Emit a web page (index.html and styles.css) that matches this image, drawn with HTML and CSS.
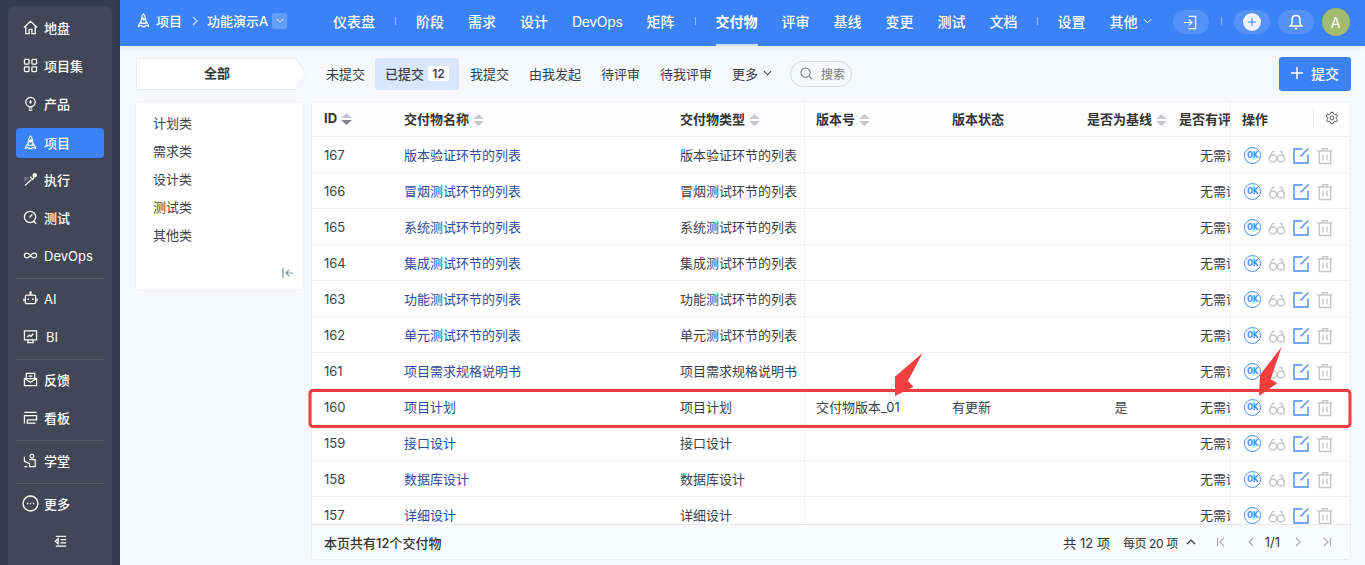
FILE: index.html
```html
<!DOCTYPE html>
<html lang="zh-CN">
<head>
    <title>项目 - 交付物</title>
    <meta charset="utf-8">
    <link rel="stylesheet" href="styles.css">
</head>
<body>
    <svg class="defs" width="0" height="0">
        <symbol id="i-rocket" viewBox="0 0 16 16"><path d="M8 1C5.800 3.400 5.300 6 5.500 11h5C10.700 6 10.200 3.400 8 1zM5.500 8.500L3 12.500l-.5 2 3-1.500M10.500 8.500l2.500 4 .5 2-3-1.500M6.500 13l-.3 1.500h3.600L9.500 13" fill="none" stroke="currentColor" stroke-width="1.200" stroke-linejoin="round"/><circle cx="8" cy="6.500" r="1.200" fill="currentColor"/></symbol>
        <symbol id="i-sort" viewBox="0 0 11 12"><path d="M5.500 0L11 5H0z" fill="#c9cad0"/><path d="M5.500 12L0 7h11z" fill="#c4c5cc"/></symbol>
        <symbol id="i-sort-on" viewBox="0 0 11 12"><path d="M5.500 0L11 5H0z" fill="#c4c5cc"/><path d="M5.500 12L0 7h11z" fill="#85868e"/></symbol>
        <symbol id="i-glasses" viewBox="0 0 18 18"><g fill="none" stroke="#c8c8c8" stroke-width="1.500"><circle cx="5" cy="11.500" r="3.500"/><circle cx="13" cy="11.500" r="3.500"/><path d="M8.400 11h1.200M1.500 11L4.500 4.500h2M16.500 11L13.500 4.500h-2"/></g></symbol>
        <symbol id="i-edit" viewBox="0 0 18 18"><path d="M10.500 2H2v14h14V7.500M16.500 1.500L8.500 9.500" fill="none" stroke="#4d8af5" stroke-width="1.400"/></symbol>
        <symbol id="i-trash" viewBox="0 0 18 18"><path d="M1.500 4h15M6.500 4V1.800h5V4M3.300 4v12.500h11.400V4M7 7.500v6M11 7.500v6" fill="none" stroke="#c8c8c8" stroke-width="1.400"/></symbol>
    </svg>

    <aside class="sidebar">
        <nav class="side-panel">
            <a class="side-item"><svg class="side-icon" viewBox="0 0 16 16"><path d="M1 8l7-6.500L15 8M3 7v7.500h3.500V10h3v4.500H13V7"/></svg>地盘</a>
            <a class="side-item"><svg class="side-icon" viewBox="0 0 16 16"><rect x="1.500" y="1.500" width="5" height="5" rx=".8"/><rect x="9.500" y="1.500" width="5" height="5" rx=".8"/><rect x="1.500" y="9.500" width="5" height="5" rx=".8"/><rect x="9.500" y="9.500" width="5" height="5" rx=".8"/></svg>项目集</a>
            <a class="side-item"><svg class="side-icon" viewBox="0 0 16 16"><circle cx="8" cy="6.500" r="5"/><path d="M6 15h4M6 12.800h4M8 4.500v3.500M6.500 6.500h3"/></svg>产品</a>
            <a class="side-item active"><svg class="side-icon"><use href="#i-rocket"/></svg>项目</a>
            <a class="side-item"><svg class="side-icon" viewBox="0 0 16 16"><path d="M2 14.500L9 8M7.500 5l3 3 1-2.500"/><circle cx="12.500" cy="3.500" r="1.800" fill="currentColor"/><path d="M1 6.500h5M1 8.500h3" stroke="#7b8090" stroke-width="1.600"/></svg>执行</a>
            <a class="side-item"><svg class="side-icon" viewBox="0 0 16 16"><circle cx="7.500" cy="7.500" r="6"/><path d="M11.500 12l2.500 2.800M10 4.800L7 8"/></svg>测试</a>
            <a class="side-item side-latin"><svg class="side-icon" viewBox="0 0 16 16"><path d="M8 8C6.800 6.300 5.600 5.500 4 5.500a2.500 2.500 0 000 5c1.600 0 2.800-.8 4-2.500zm0 0c1.200-1.700 2.400-2.500 4-2.500a2.500 2.500 0 010 5c-1.600 0-2.800-.8-4-2.500z"/></svg>DevOps</a>
            <div class="side-line"></div>
            <a class="side-item side-latin"><svg class="side-icon" viewBox="0 0 16 16"><rect x="2.500" y="4.500" width="11" height="9" rx="1.500"/><path d="M8 4.500V2M1 8v3M15 8v3"/><circle cx="8" cy="1.800" r=".8" fill="currentColor"/><path d="M5.500 8v1.500M10.500 8v1.500" stroke-width="1.600"/></svg>AI</a>
            <a class="side-item side-latin side-item-bi"><svg class="side-icon" viewBox="0 0 16 16"><path d="M1.500 2h13v9.500h-13zM5.500 11.500L5 14.500h6l-.5-3M4.500 8.500L7 6.500l1.500 1.500L11 5"/></svg>BI</a>
            <div class="side-line"></div>
            <a class="side-item"><svg class="side-icon" viewBox="0 0 16 16"><path d="M3.500 7V1.500h9V7M1.500 7h13v7.500h-13zM1.500 7l6.500 4 6.500-4M6 4.500h4"/></svg>反馈</a>
            <a class="side-item"><svg class="side-icon" viewBox="0 0 16 16"><path d="M14.500 2.500h-13M1.500 5.500v9M1.500 6h13v4.500h-10M4.500 10.500v3.500h9"/></svg>看板</a>
            <div class="side-line"></div>
            <a class="side-item"><svg class="side-icon" viewBox="0 0 16 16"><circle cx="9.500" cy="3.500" r="2"/><path d="M6.500 7h6.500v7.500H7v-4M1.500 4v5l5 2M1.500 14.500h3"/></svg>学堂</a>
            <div class="side-line"></div>
            <a class="side-item"><svg class="side-icon side-icon-big" viewBox="0 0 16 16"><circle cx="8" cy="8" r="7"/><path d="M4.600 8h1.200M7.400 8h1.200M10.200 8h1.200" stroke-width="1.600"/></svg>更多</a>
            <a class="side-item side-collapse"><svg class="side-icon" viewBox="0 0 16 16"><path d="M3 2.500h11M8 6h6M8 9.500h6M3 13h11M5.500 5L2.500 7.800l3 2.700z" /></svg></a>
        </nav>
    </aside>

    <div class="page">
        <header class="topbar">
            <div class="crumb">
                <svg class="crumb-icon"><use href="#i-rocket"/></svg>
                <span>项目</span>
                <svg class="crumb-arrow" viewBox="0 0 6 10"><path d="M1 1l4 4-4 4"/></svg>
                <span>功能演示A</span>
                <span class="crumb-drop"><svg viewBox="0 0 10 6"><path d="M1 1l4 4 4-4"/></svg></span>
            </div>
            <nav class="topnav">
                <a class="nav-item">仪表盘</a>
                <i class="nav-sep"></i>
                <a class="nav-item">阶段</a>
                <a class="nav-item">需求</a>
                <a class="nav-item">设计</a>
                <a class="nav-item nav-latin">DevOps</a>
                <a class="nav-item">矩阵</a>
                <i class="nav-sep"></i>
                <a class="nav-item active">交付物</a>
                <a class="nav-item">评审</a>
                <a class="nav-item">基线</a>
                <a class="nav-item">变更</a>
                <a class="nav-item">测试</a>
                <a class="nav-item">文档</a>
                <i class="nav-sep"></i>
                <a class="nav-item">设置</a>
                <a class="nav-item nav-more">其他<svg viewBox="0 0 10 6"><path d="M1 1l4 4 4-4"/></svg></a>
            </nav>
            <div class="top-tools">
                <span class="pill"><svg viewBox="0 0 16 16"><path d="M6 1.500h7.500v13H6M1 8h8M6.500 5L9.500 8l-3 3"/></svg></span>
                <i class="tool-sep"></i>
                <span class="pill"><span class="plus-dot"><svg viewBox="0 0 12 12"><path d="M6 1v10M1 6h10"/></svg></span></span>
                <span class="pill"><svg class="bell" viewBox="0 0 16 16"><path d="M8 1.500c-2.800 0-4 2-4 4.500v4l-1.800 2h11.600L12 10V6c0-2.500-1.200-4.500-4-4.500zM6.500 14.500h3"/></svg></span>
                <span class="avatar">A</span>
            </div>
        </header>

        <main class="content">
            <div class="toolbar">
                <div class="all-tab"><span class="all-box">全部</span><svg class="all-tip" viewBox="0 0 12 32"><path d="M0 .5h.5L11 16 .5 31.500H0" fill="#fff" stroke="#e9ebf0"/></svg></div>
                <div class="tabs">
                    <a class="tab">未提交</a>
                    <a class="tab active">已提交<b class="tab-count">12</b></a>
                    <a class="tab tab-next">我提交</a>
                    <a class="tab">由我发起</a>
                    <a class="tab">待评审</a>
                    <a class="tab">待我评审</a>
                    <a class="tab tab-more">更多<svg viewBox="0 0 10 6"><path d="M1 1l4 4 4-4"/></svg></a>
                </div>
                <div class="search"><svg viewBox="0 0 14 14"><circle cx="6" cy="6" r="5"/><path d="M9.800 9.800L13 13"/></svg>搜索</div>
                <button type="button" class="btn-submit"><svg viewBox="0 0 12 12"><path d="M6 0v12M0 6h12"/></svg>提交</button>
            </div>

            <div class="workspace">
                <div class="tree">
                    <a class="tree-item">计划类</a>
                    <a class="tree-item">需求类</a>
                    <a class="tree-item">设计类</a>
                    <a class="tree-item">测试类</a>
                    <a class="tree-item">其他类</a>
                    <svg class="tree-fold" viewBox="0 0 12 10"><path d="M1 0v10M11 5H4M7 2L4 5l3 3"/></svg>
                </div>
                <section class="grid-card">
                    <div class="grid-scroll">
                        <table class="grid">
                            <colgroup>
                                <col class="c-id"><col class="c-name"><col class="c-type"><col class="c-ver"><col class="c-state"><col class="c-base"><col class="c-review"><col class="c-extra"><col class="c-ops">
                            </colgroup>
                            <thead>
                                <tr>
                                    <th>ID<svg class="sort"><use href="#i-sort-on"/></svg></th>
                                    <th>交付物名称<svg class="sort"><use href="#i-sort"/></svg></th>
                                    <th>交付物类型<svg class="sort"><use href="#i-sort"/></svg></th>
                                    <th class="ver">版本号<svg class="sort"><use href="#i-sort"/></svg></th>
                                    <th>版本状态</th>
                                    <th>是否为基线<svg class="sort"><use href="#i-sort"/></svg></th>
                                    <th>是否有评审</th>
                                    <th></th>
                                    <th class="ops"><div class="ops-head">操作<i class="ops-sep"></i><svg class="gear" viewBox="0 0 16 16"><circle cx="8" cy="8" r="2.200"/><path d="M6.700 1.500h2.600l.4 1.900 1.400.8 1.900-.6 1.300 2.200-1.500 1.300v1.800l1.500 1.300-1.300 2.200-1.900-.6-1.400.8-.4 1.900H6.700l-.4-1.900-1.400-.8-1.900.6-1.300-2.200 1.500-1.300V7.100L1.200 5.800l1.300-2.200 1.900.6 1.400-.8z"/></svg></div></th>
                                </tr>
                            </thead>
                            <tbody>
                                <tr><td>167</td><td class="name">版本验证环节的列表</td><td>版本验证环节的列表</td><td class="ver"></td><td></td><td class="mid"></td><td class="mid">无需评审</td><td></td><td class="ops"><div class="ops-row"><span class="ok">OK</span><svg><use href="#i-glasses"/></svg><svg><use href="#i-edit"/></svg><svg><use href="#i-trash"/></svg></div></td></tr>
                                <tr><td>166</td><td class="name">冒烟测试环节的列表</td><td>冒烟测试环节的列表</td><td class="ver"></td><td></td><td class="mid"></td><td class="mid">无需评审</td><td></td><td class="ops"><div class="ops-row"><span class="ok">OK</span><svg><use href="#i-glasses"/></svg><svg><use href="#i-edit"/></svg><svg><use href="#i-trash"/></svg></div></td></tr>
                                <tr><td>165</td><td class="name">系统测试环节的列表</td><td>系统测试环节的列表</td><td class="ver"></td><td></td><td class="mid"></td><td class="mid">无需评审</td><td></td><td class="ops"><div class="ops-row"><span class="ok">OK</span><svg><use href="#i-glasses"/></svg><svg><use href="#i-edit"/></svg><svg><use href="#i-trash"/></svg></div></td></tr>
                                <tr><td>164</td><td class="name">集成测试环节的列表</td><td>集成测试环节的列表</td><td class="ver"></td><td></td><td class="mid"></td><td class="mid">无需评审</td><td></td><td class="ops"><div class="ops-row"><span class="ok">OK</span><svg><use href="#i-glasses"/></svg><svg><use href="#i-edit"/></svg><svg><use href="#i-trash"/></svg></div></td></tr>
                                <tr><td>163</td><td class="name">功能测试环节的列表</td><td>功能测试环节的列表</td><td class="ver"></td><td></td><td class="mid"></td><td class="mid">无需评审</td><td></td><td class="ops"><div class="ops-row"><span class="ok">OK</span><svg><use href="#i-glasses"/></svg><svg><use href="#i-edit"/></svg><svg><use href="#i-trash"/></svg></div></td></tr>
                                <tr><td>162</td><td class="name">单元测试环节的列表</td><td>单元测试环节的列表</td><td class="ver"></td><td></td><td class="mid"></td><td class="mid">无需评审</td><td></td><td class="ops"><div class="ops-row"><span class="ok">OK</span><svg><use href="#i-glasses"/></svg><svg><use href="#i-edit"/></svg><svg><use href="#i-trash"/></svg></div></td></tr>
                                <tr><td>161</td><td class="name">项目需求规格说明书</td><td>项目需求规格说明书</td><td class="ver"></td><td></td><td class="mid"></td><td class="mid">无需评审</td><td></td><td class="ops"><div class="ops-row"><span class="ok">OK</span><svg><use href="#i-glasses"/></svg><svg><use href="#i-edit"/></svg><svg><use href="#i-trash"/></svg></div></td></tr>
                                <tr><td>160</td><td class="name">项目计划</td><td>项目计划</td><td class="ver">交付物版本_01</td><td>有更新</td><td class="mid">是</td><td class="mid">无需评审</td><td></td><td class="ops"><div class="ops-row"><span class="ok">OK</span><svg><use href="#i-glasses"/></svg><svg><use href="#i-edit"/></svg><svg><use href="#i-trash"/></svg></div></td></tr>
                                <tr><td>159</td><td class="name">接口设计</td><td>接口设计</td><td class="ver"></td><td></td><td class="mid"></td><td class="mid">无需评审</td><td></td><td class="ops"><div class="ops-row"><span class="ok">OK</span><svg><use href="#i-glasses"/></svg><svg><use href="#i-edit"/></svg><svg><use href="#i-trash"/></svg></div></td></tr>
                                <tr><td>158</td><td class="name">数据库设计</td><td>数据库设计</td><td class="ver"></td><td></td><td class="mid"></td><td class="mid">无需评审</td><td></td><td class="ops"><div class="ops-row"><span class="ok">OK</span><svg><use href="#i-glasses"/></svg><svg><use href="#i-edit"/></svg><svg><use href="#i-trash"/></svg></div></td></tr>
                                <tr><td>157</td><td class="name">详细设计</td><td>详细设计</td><td class="ver"></td><td></td><td class="mid"></td><td class="mid">无需评审</td><td></td><td class="ops"><div class="ops-row"><span class="ok">OK</span><svg><use href="#i-glasses"/></svg><svg><use href="#i-edit"/></svg><svg><use href="#i-trash"/></svg></div></td></tr>
                            </tbody>
                        </table>
                    </div>
                    <footer class="grid-foot">
                        <span class="foot-note">本页共有12个交付物</span>
                        <div class="pager">
                            <span>共 12 项</span>
                            <span class="page-size">每页 20 项<svg viewBox="0 0 10 6"><path d="M1 5l4-4 4 4"/></svg></span>
                            <svg class="page-btn page-first" viewBox="0 0 10 10"><path d="M1.500 1v8M8 1L4 5l4 4"/></svg>
                            <svg class="page-btn page-prev" viewBox="0 0 10 10"><path d="M7 1L3 5l4 4"/></svg>
                            <span class="page-num">1/1</span>
                            <svg class="page-btn page-next" viewBox="0 0 10 10"><path d="M3 1l4 4-4 4"/></svg>
                            <svg class="page-btn" viewBox="0 0 10 10"><path d="M8.500 1v8M2 1l4 4-4 4"/></svg>
                        </div>
                    </footer>
                </section>
            </div>
        </main>
    </div>

    <svg class="marks" viewBox="0 0 1365 565">
        <rect x="310" y="390.500" width="1040" height="36" rx="3" fill="none" stroke="#f33d3f" stroke-width="3"/>
        <polygon points="922.700,352.700 908,381 913.500,386.700 895,396 895,376.700" fill="#f33d3f"/>
        <polygon points="1281.700,346.700 1270.700,379.300 1277.300,383.300 1259,396 1260,375" fill="#f33d3f"/>
    </svg>
</body>
</html>
```

FILE: styles.css
```css
* { margin: 0; padding: 0; box-sizing: border-box; }
body {
    display: flex; height: 100vh; overflow: hidden;
    background: #f7f8fa; color: #333;
    font-family: Inter, "Noto Sans CJK SC", sans-serif; font-size: 13px;
}
a { color: inherit; text-decoration: none; cursor: pointer; }
svg { fill: none; stroke: currentColor; flex-shrink: 0; }
.defs { position: absolute; }

/* sidebar */
.sidebar { width: 120px; flex-shrink: 0; background: #333b4d; padding: 6px 8px 0; }
.side-panel {
    display: flex; flex-direction: column; height: 100%;
    background: #414756; border-radius: 6px 6px 0 0; padding-top: 3px;
}
.side-item {
    display: flex; align-items: center; gap: 6px; height: 30px; margin: 4px 8px; padding: 0 0 1px 7px;
    border-radius: 4px; color: #fff; font-weight: 500; flex-shrink: 0;
}
.side-item.active { background: #3b82f7; margin-top: 5px; margin-bottom: 3px; }
.side-latin { font-weight: 400; }
.side-item-bi { gap: 8px; }
.side-icon { width: 15px; height: 15px; stroke-width: 1.3; }
.side-icon-big { width: 17px; height: 17px; margin-left: -1px; margin-right: -1px; }
.side-collapse { justify-content: center; padding-left: 0; }
.side-line { height: 1px; margin: 3px 8px 1px; background: #565b6a; flex-shrink: 0; }

/* top bar */
.page { flex: 1; min-width: 0; display: flex; flex-direction: column; }
.topbar {
    display: flex; align-items: center; height: 46px; padding-left: 17px; flex-shrink: 0;
    background: #3b82f7; color: #fff; box-shadow: 0 1px 4px rgba(0, 0, 0, .08); position: relative;
}
.crumb { display: flex; align-items: center; padding-bottom: 5px; font-weight: 500; width: 150px; flex-shrink: 0; white-space: nowrap; }
.crumb-icon { width: 15px; height: 15px; margin: 0 5px 0 -1px; }
.crumb-arrow { width: 6px; height: 10px; margin: 0 9px 0 10px; stroke: #bcd5fc; stroke-width: 1.5; }
.crumb-drop {
    display: flex; align-items: center; justify-content: center;
    width: 16px; height: 16px; margin-left: 4px; border-radius: 2px; background: rgba(255, 255, 255, .22);
}
.crumb-drop svg { width: 8px; height: 5px; }
.topnav { display: flex; align-items: center; height: 46px; margin-left: 34px; flex-shrink: 0; }
.nav-item {
    display: flex; align-items: center; height: 46px; padding: 0 12px 5px; white-space: nowrap;
    font-size: 14px; font-weight: 500; color: #fff;
}
.nav-latin { font-weight: 400; letter-spacing: -.33px; padding-bottom: 4px; }
.nav-item.active { font-weight: 700; position: relative; }
.nav-item.active::after {
    content: ""; position: absolute; left: 12px; right: 12px; bottom: 0; height: 2px; background: rgba(255, 255, 255, .75);
}
.nav-sep { width: 1px; height: 8px; margin: -4px 8px 0; background: rgba(255, 255, 255, .45); }
.nav-sep:last-of-type { margin-left: 7px; }
.nav-more svg { width: 9px; height: 6px; margin-left: 5px; stroke-width: 1.1; }
.top-tools { display: flex; align-items: center; margin-left: 9px; flex-shrink: 0; }
.pill {
    display: flex; align-items: center; justify-content: center;
    width: 36px; height: 24px; margin-right: 8px; margin-top: -2px; border-radius: 12px; background: rgba(255, 255, 255, .13);
}
.pill > svg { width: 15px; height: 15px; stroke-width: 1.2; }
.pill > .bell { width: 16px; height: 16px; stroke-width: 1.5; }
.tool-sep { width: 1px; height: 8px; margin: -4px 12px 0 4px; background: rgba(255, 255, 255, .4); }
.plus-dot {
    display: flex; align-items: center; justify-content: center;
    width: 18px; height: 18px; border-radius: 50%; background: #eef4ff; color: #3b82f7;
}
.plus-dot svg { width: 10px; height: 10px; stroke-width: 1.2; }
.avatar {
    display: flex; align-items: center; justify-content: center;
    width: 28px; height: 28px; margin-top: -2px; border-radius: 50%; background: #a3bb6c; color: #fff; font-size: 14px;
}

/* toolbar */
.content { flex: 1; min-height: 0; display: flex; flex-direction: column; padding: 11px 14px 5px 16px; }
.toolbar { display: flex; align-items: center; height: 34px; margin-bottom: 10px; flex-shrink: 0; }
.all-tab { display: flex; width: 171px; height: 32px; flex-shrink: 0; margin-top: -1px; }
.all-box {
    display: flex; align-items: center; justify-content: center; width: 160px; height: 32px; padding: 0 0 2px 2px;
    background: #fff; border: 1px solid #e9ebf0; border-right: 0; border-radius: 2px 0 0 2px;
    font-weight: 700; color: #333;
}
.all-tip { width: 12px; height: 32px; stroke: none; }
.tabs { display: flex; align-items: center; margin-left: 9px; }
.tab { display: flex; align-items: center; height: 32px; padding: 0 10px 2px; border-radius: 3px; color: #3c3f4a; }
.tab.active { background: #d8e7fd; font-weight: 500; }
.tab-next { margin-left: 1px; }
.tab-count {
    display: inline-block; width: 21px; height: 15px; line-height: 15px; margin-left: 4px;
    background: #fff; border-radius: 3px; font-size: 12px; text-align: center; font-weight: 600;
}
.tab-more svg { width: 9px; height: 6px; margin-left: 5px; stroke-width: 1.2; }
.search {
    display: flex; align-items: center; gap: 8px; width: 62px; height: 26px; margin-left: 8px; padding: 0 0 1px 9px;
    border: 1px solid #d6d6e2; border-radius: 13px; font-size: 12px; color: #777;
}
.search svg { width: 13px; height: 13px; stroke-width: 1.1; }
.btn-submit {
    display: flex; align-items: center; justify-content: center; gap: 8px; width: 72px; height: 34px; margin-left: auto; padding-bottom: 2px;
    background: #3b82f7; border: none; border-radius: 3px; color: #fff;
    font: 500 14px Inter, "Noto Sans CJK SC", sans-serif;
}
.btn-submit svg { width: 12px; height: 12px; stroke-width: 1.5; }

/* tree + table */
.workspace { flex: 1; min-height: 0; display: flex; align-items: flex-start; }
.tree {
    position: relative; display: flex; flex-direction: column; width: 169px; height: 190px; margin-left: -1px; padding-top: 7px;
    background: #fff; border: 1px solid #eef0f4; border-radius: 3px;
}
.tree-item { height: 28px; line-height: 28px; padding-left: 17px; color: #3c3f4a; }
.tree-fold { position: absolute; right: 9px; bottom: 12px; width: 12px; height: 10px; color: #8494a8; stroke-width: 1.2; }
.grid-card {
    display: flex; flex-direction: column; flex: 1; min-width: 0; height: 459px; margin-left: 7px;
    background: #fff; border: 1px solid #eceef2; border-radius: 3px; overflow: hidden;
}
.grid-scroll { flex: 1; min-height: 0; overflow: hidden; }
.grid { width: 1137px; table-layout: fixed; border-collapse: separate; border-spacing: 0; color: #3c3f4a; }
.c-id { width: 80px; }
.c-name { width: 276px; }
.c-type { width: 136px; }
.c-ver { width: 136px; }
.c-state { width: 135px; }
.c-base { width: 92px; }
.c-review { width: 118px; }
.c-extra { width: 44px; }
.c-ops { width: 120px; }
.grid th, .grid td {
    height: 36px; padding: 0 0 0 12px; border-bottom: 1px solid #eff1f4; white-space: nowrap;
    text-align: left; background: #fff;
}
.grid th { height: 35px; padding-bottom: 2px; font-weight: 700; color: #333; background: #fdfdfe; }
.grid .ver { border-left: 1px solid #eff1f4; padding-left: 11px; }
.grid .mid { text-align: center; padding-left: 0; }
.grid .name { color: #2f4a9c; }
.grid .ops { position: sticky; right: 0; border-left: 1px solid #eff1f4; padding-left: 11px; }
.sort { width: 11px; height: 12px; margin-left: 4px; vertical-align: -2px; stroke: none; }
.ops-head { display: flex; align-items: center; }
.ops-sep { width: 1px; height: 20px; margin-left: 45px; background: #eceef2; }
.gear { width: 14px; height: 14px; margin-left: 11px; color: #555; stroke-width: 1.1; }
.ops-row { display: flex; align-items: center; gap: 6px; margin: 2px 0 0 2px; }
.ops-row svg { width: 18px; height: 18px; stroke: none; }
.ok {
    display: flex; align-items: center; justify-content: center; width: 17px; height: 17px; margin-right: 1px;
    border: 1.2px solid #4d8af5; border-radius: 50%; color: #4d8af5;
    font-family: "DejaVu Sans", sans-serif; font-size: 8px; font-weight: 700; font-stretch: condensed; letter-spacing: -.4px;
}
.grid-foot {
    display: flex; align-items: center; justify-content: space-between; height: 35px; flex-shrink: 0; padding: 0 18px 0 12px;
    background: #fafbfc; border-top: 1px solid #e6e8ec; color: #333;
}
.foot-note { font-weight: 500; }
.pager { display: flex; align-items: center; white-space: nowrap; }
.page-size { display: flex; align-items: center; margin-left: 13px; font-size: 12px; letter-spacing: -.4px; }
.page-size svg { width: 10px; height: 6px; margin: 0 20px 0 8px; stroke-width: 1.2; }
.page-btn { width: 10px; height: 10px; color: #aaa; stroke-width: 1.1; }
.page-first { margin-right: 20px; }
.page-prev { margin-right: 9px; }
.page-next { margin: 0 19px 0 13px; }

/* annotation marks over the page */
.marks { position: absolute; left: 0; top: 0; width: 1365px; height: 565px; pointer-events: none; stroke: none; }
```
